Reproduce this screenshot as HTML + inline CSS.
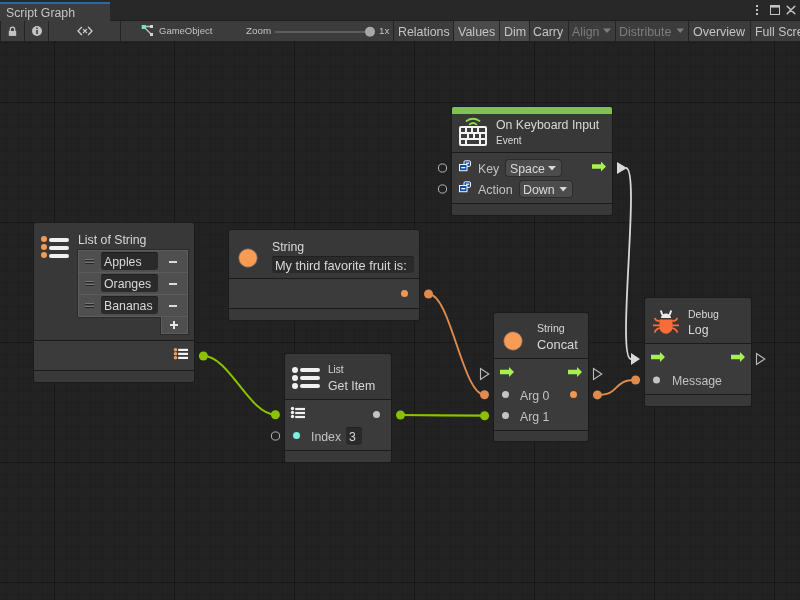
<!DOCTYPE html>
<html><head><meta charset="utf-8"><style>
*{-webkit-font-smoothing:antialiased;}
html,body{margin:0;padding:0;width:800px;height:600px;overflow:hidden;background:#222222;font-family:"Liberation Sans", sans-serif;}
</style></head><body>
<div style="position:absolute;left:0px;top:0px;width:800px;height:21px;background:#282828;"></div><div style="position:absolute;left:110px;top:20px;width:690px;height:1px;background:#1f1f1f;"></div><div style="position:absolute;left:0px;top:2px;width:110px;height:19px;background:#3c3c3c;"></div><div style="position:absolute;left:0px;top:2px;width:110px;height:2px;background:#2e68a0;"></div><div style="position:absolute;left:6px;top:7px;font-size:12.3px;line-height:1;color:#c4c4c4;white-space:nowrap;will-change:transform;">Script Graph</div><div style="position:absolute;left:0px;top:21px;width:800px;height:20px;background:#3c3c3c;"></div><div style="position:absolute;left:0px;top:21px;width:1px;height:20px;background:#242424;"></div><div style="position:absolute;left:24px;top:21px;width:1px;height:20px;background:#242424;"></div><div style="position:absolute;left:48px;top:21px;width:1px;height:20px;background:#242424;"></div><div style="position:absolute;left:120px;top:21px;width:1px;height:20px;background:#242424;"></div><div style="position:absolute;left:393px;top:21px;width:1px;height:20px;background:#242424;"></div><div style="position:absolute;left:453px;top:21px;width:1px;height:20px;background:#242424;"></div><div style="position:absolute;left:499px;top:21px;width:1px;height:20px;background:#242424;"></div><div style="position:absolute;left:529px;top:21px;width:1px;height:20px;background:#242424;"></div><div style="position:absolute;left:568px;top:21px;width:1px;height:20px;background:#242424;"></div><div style="position:absolute;left:615px;top:21px;width:1px;height:20px;background:#242424;"></div><div style="position:absolute;left:688px;top:21px;width:1px;height:20px;background:#242424;"></div><div style="position:absolute;left:750px;top:21px;width:1px;height:20px;background:#242424;"></div><div style="position:absolute;left:454px;top:21px;width:45px;height:20px;background:#4a4a4a;"></div><div style="position:absolute;left:500px;top:21px;width:29px;height:20px;background:#4a4a4a;"></div><div style="position:absolute;left:398px;top:26px;font-size:12.4px;line-height:1;color:#c4c4c4;white-space:nowrap;will-change:transform;">Relations</div><div style="position:absolute;left:458px;top:26px;font-size:12.5px;line-height:1;color:#c4c4c4;white-space:nowrap;will-change:transform;">Values</div><div style="position:absolute;left:504px;top:26px;font-size:12.5px;line-height:1;color:#c4c4c4;white-space:nowrap;will-change:transform;">Dim</div><div style="position:absolute;left:533px;top:26px;font-size:12.3px;line-height:1;color:#c4c4c4;white-space:nowrap;will-change:transform;">Carry</div><div style="position:absolute;left:572px;top:26px;font-size:12.3px;line-height:1;color:#7d7d7d;white-space:nowrap;will-change:transform;">Align</div><div style="position:absolute;left:619px;top:26px;font-size:12.4px;line-height:1;color:#7d7d7d;white-space:nowrap;will-change:transform;">Distribute</div><div style="position:absolute;left:693px;top:26px;font-size:12.5px;line-height:1;color:#c4c4c4;white-space:nowrap;will-change:transform;">Overview</div><div style="position:absolute;left:755px;top:26px;font-size:12.3px;line-height:1;color:#c4c4c4;white-space:nowrap;will-change:transform;">Full Screen</div><div style="position:absolute;left:159px;top:26px;font-size:9.5px;line-height:1;color:#c4c4c4;white-space:nowrap;will-change:transform;">GameObject</div><div style="position:absolute;left:246px;top:26px;font-size:9.8px;line-height:1;color:#c4c4c4;white-space:nowrap;will-change:transform;">Zoom</div><div style="position:absolute;left:379px;top:26px;font-size:9.8px;line-height:1;color:#c4c4c4;white-space:nowrap;will-change:transform;">1x</div><div style="position:absolute;left:275px;top:31px;width:95px;height:2px;background:#5e5e5e;"></div><div style="position:absolute;left:0px;top:41px;width:800px;height:559px;background:#222222;background-color:#222222;background-image:linear-gradient(to right, rgba(0,0,0,0.24) 1px, transparent 1px),linear-gradient(to bottom, rgba(0,0,0,0.24) 1px, transparent 1px),linear-gradient(to right, rgba(0,0,0,0.08) 1px, transparent 1px),linear-gradient(to bottom, rgba(0,0,0,0.08) 1px, transparent 1px);background-size:120px 120px,120px 120px,12px 12px,12px 12px;background-position:54px 61px,54px 61px,6px 1px,6px 1px;"></div><div style="position:absolute;left:33px;top:222px;width:162px;height:161px;background:#1b1b1b;border-radius:3px"></div><div style="position:absolute;left:34px;top:223px;width:160px;height:159px;background:#383838;border-radius:2px"></div><div style="position:absolute;left:34px;top:341px;width:160px;height:29px;background:#3b3b3b;"></div><div style="position:absolute;left:34px;top:371px;width:160px;height:11px;background:#393939;border-radius:0 0 2px 2px"></div><div style="position:absolute;left:34px;top:340px;width:160px;height:1px;background:#1b1b1b;"></div><div style="position:absolute;left:34px;top:370px;width:160px;height:1px;background:#1b1b1b;"></div><div style="position:absolute;left:228px;top:229px;width:192px;height:92px;background:#1b1b1b;border-radius:3px"></div><div style="position:absolute;left:229px;top:230px;width:190px;height:90px;background:#383838;border-radius:2px"></div><div style="position:absolute;left:229px;top:279px;width:190px;height:29px;background:#3b3b3b;"></div><div style="position:absolute;left:229px;top:309px;width:190px;height:11px;background:#393939;border-radius:0 0 2px 2px"></div><div style="position:absolute;left:229px;top:278px;width:190px;height:1px;background:#1b1b1b;"></div><div style="position:absolute;left:229px;top:308px;width:190px;height:1px;background:#1b1b1b;"></div><div style="position:absolute;left:451px;top:106px;width:162px;height:110px;background:#1b1b1b;border-radius:3px"></div><div style="position:absolute;left:452px;top:107px;width:160px;height:108px;background:#383838;border-radius:2px"></div><div style="position:absolute;left:452px;top:153px;width:160px;height:50px;background:#3b3b3b;"></div><div style="position:absolute;left:452px;top:204px;width:160px;height:11px;background:#393939;border-radius:0 0 2px 2px"></div><div style="position:absolute;left:452px;top:152px;width:160px;height:1px;background:#1b1b1b;"></div><div style="position:absolute;left:452px;top:203px;width:160px;height:1px;background:#1b1b1b;"></div><div style="position:absolute;left:452px;top:107px;width:160px;height:7px;background:#83c052;border-radius:2px 2px 0 0"></div><div style="position:absolute;left:284px;top:353px;width:108px;height:110px;background:#1b1b1b;border-radius:3px"></div><div style="position:absolute;left:285px;top:354px;width:106px;height:108px;background:#383838;border-radius:2px"></div><div style="position:absolute;left:285px;top:400px;width:106px;height:50px;background:#3b3b3b;"></div><div style="position:absolute;left:285px;top:451px;width:106px;height:11px;background:#393939;border-radius:0 0 2px 2px"></div><div style="position:absolute;left:285px;top:399px;width:106px;height:1px;background:#1b1b1b;"></div><div style="position:absolute;left:285px;top:450px;width:106px;height:1px;background:#1b1b1b;"></div><div style="position:absolute;left:493px;top:312px;width:96px;height:130px;background:#1b1b1b;border-radius:3px"></div><div style="position:absolute;left:494px;top:313px;width:94px;height:128px;background:#383838;border-radius:2px"></div><div style="position:absolute;left:494px;top:359px;width:94px;height:71px;background:#3b3b3b;"></div><div style="position:absolute;left:494px;top:431px;width:94px;height:10px;background:#393939;border-radius:0 0 2px 2px"></div><div style="position:absolute;left:494px;top:358px;width:94px;height:1px;background:#1b1b1b;"></div><div style="position:absolute;left:494px;top:430px;width:94px;height:1px;background:#1b1b1b;"></div><div style="position:absolute;left:644px;top:297px;width:108px;height:110px;background:#1b1b1b;border-radius:3px"></div><div style="position:absolute;left:645px;top:298px;width:106px;height:108px;background:#383838;border-radius:2px"></div><div style="position:absolute;left:645px;top:344px;width:106px;height:50px;background:#3b3b3b;"></div><div style="position:absolute;left:645px;top:395px;width:106px;height:11px;background:#393939;border-radius:0 0 2px 2px"></div><div style="position:absolute;left:645px;top:343px;width:106px;height:1px;background:#1b1b1b;"></div><div style="position:absolute;left:645px;top:394px;width:106px;height:1px;background:#1b1b1b;"></div><div style="position:absolute;left:78px;top:234px;font-size:12.3px;line-height:1;color:#d8d8d8;white-space:nowrap;will-change:transform;">List of String</div><div style="position:absolute;left:77px;top:249px;width:112px;height:69px;background:#2a2a2a;"></div><div style="position:absolute;left:78px;top:250px;width:110px;height:67px;background:#5c5c5c;"></div><div style="position:absolute;left:79px;top:251px;width:108px;height:65px;background:#4f4f4f;"></div><div style="position:absolute;left:85px;top:259px;width:9px;height:1px;background:#767676;"></div><div style="position:absolute;left:85px;top:260px;width:9px;height:1px;background:#262626;"></div><div style="position:absolute;left:85px;top:262px;width:9px;height:1px;background:#767676;"></div><div style="position:absolute;left:85px;top:263px;width:9px;height:1px;background:#262626;"></div><div style="position:absolute;left:101px;top:252px;width:57px;height:18px;background:#2a2a2a;border-radius:3px;box-shadow:inset 0 1px 0 #202020"></div><div style="position:absolute;left:104px;top:256px;font-size:12.3px;line-height:1;color:#d8d8d8;white-space:nowrap;will-change:transform;">Apples</div><div style="position:absolute;left:169px;top:260.8px;width:8px;height:2.2px;background:#dcdcdc;"></div><div style="position:absolute;left:79px;top:272px;width:108px;height:1px;background:#5c5c5c;"></div><div style="position:absolute;left:85px;top:281px;width:9px;height:1px;background:#767676;"></div><div style="position:absolute;left:85px;top:282px;width:9px;height:1px;background:#262626;"></div><div style="position:absolute;left:85px;top:284px;width:9px;height:1px;background:#767676;"></div><div style="position:absolute;left:85px;top:285px;width:9px;height:1px;background:#262626;"></div><div style="position:absolute;left:101px;top:274px;width:57px;height:18px;background:#2a2a2a;border-radius:3px;box-shadow:inset 0 1px 0 #202020"></div><div style="position:absolute;left:104px;top:278px;font-size:12.3px;line-height:1;color:#d8d8d8;white-space:nowrap;will-change:transform;">Oranges</div><div style="position:absolute;left:169px;top:282.8px;width:8px;height:2.2px;background:#dcdcdc;"></div><div style="position:absolute;left:79px;top:294px;width:108px;height:1px;background:#5c5c5c;"></div><div style="position:absolute;left:85px;top:303px;width:9px;height:1px;background:#767676;"></div><div style="position:absolute;left:85px;top:304px;width:9px;height:1px;background:#262626;"></div><div style="position:absolute;left:85px;top:306px;width:9px;height:1px;background:#767676;"></div><div style="position:absolute;left:85px;top:307px;width:9px;height:1px;background:#262626;"></div><div style="position:absolute;left:101px;top:296px;width:57px;height:18px;background:#2a2a2a;border-radius:3px;box-shadow:inset 0 1px 0 #202020"></div><div style="position:absolute;left:104px;top:300px;font-size:12.3px;line-height:1;color:#d8d8d8;white-space:nowrap;will-change:transform;">Bananas</div><div style="position:absolute;left:169px;top:304.8px;width:8px;height:2.2px;background:#dcdcdc;"></div><div style="position:absolute;left:160px;top:317px;width:29px;height:18px;background:#2a2a2a;"></div><div style="position:absolute;left:161px;top:317px;width:27px;height:17px;background:#5c5c5c;"></div><div style="position:absolute;left:162px;top:317px;width:25px;height:16px;background:#4f4f4f;"></div><div style="position:absolute;left:272px;top:241px;font-size:12.3px;line-height:1;color:#d8d8d8;white-space:nowrap;will-change:transform;">String</div><div style="position:absolute;left:272px;top:256px;width:142px;height:17px;background:#2a2a2a;border-radius:3px;box-shadow:inset 0 1px 0 #202020"></div><div style="position:absolute;left:275px;top:260px;font-size:12.75px;line-height:1;color:#d8d8d8;white-space:nowrap;will-change:transform;">My third favorite fruit is:</div><div style="position:absolute;left:496px;top:119px;font-size:12.3px;line-height:1;color:#d8d8d8;white-space:nowrap;will-change:transform;">On Keyboard Input</div><div style="position:absolute;left:496px;top:136px;font-size:10px;line-height:1;color:#d8d8d8;white-space:nowrap;will-change:transform;">Event</div><div style="position:absolute;left:478px;top:163px;font-size:12.3px;line-height:1;color:#c2c2c2;white-space:nowrap;will-change:transform;">Key</div><div style="position:absolute;left:478px;top:184px;font-size:12.5px;line-height:1;color:#c2c2c2;white-space:nowrap;will-change:transform;">Action</div><div style="position:absolute;left:506px;top:160px;width:55px;height:16px;background:#4c4c4c;border-radius:3px;box-shadow:0 0 0 1px #2c2c2c"></div><div style="position:absolute;left:510px;top:163px;font-size:12.3px;line-height:1;color:#d8d8d8;white-space:nowrap;will-change:transform;">Space</div><div style="position:absolute;left:520px;top:181px;width:52px;height:16px;background:#4c4c4c;border-radius:3px;box-shadow:0 0 0 1px #2c2c2c"></div><div style="position:absolute;left:523px;top:184px;font-size:12.4px;line-height:1;color:#d8d8d8;white-space:nowrap;will-change:transform;">Down</div><div style="position:absolute;left:328px;top:365px;font-size:10px;line-height:1;color:#d8d8d8;white-space:nowrap;will-change:transform;">List</div><div style="position:absolute;left:328px;top:380px;font-size:12.3px;line-height:1;color:#d8d8d8;white-space:nowrap;will-change:transform;">Get Item</div><div style="position:absolute;left:311px;top:431px;font-size:12.3px;line-height:1;color:#c2c2c2;white-space:nowrap;will-change:transform;">Index</div><div style="position:absolute;left:346px;top:427px;width:16px;height:17.5px;background:#2a2a2a;border-radius:3px;box-shadow:inset 0 1px 0 #202020"></div><div style="position:absolute;left:349px;top:431px;font-size:12.3px;line-height:1;color:#d8d8d8;white-space:nowrap;will-change:transform;">3</div><div style="position:absolute;left:537px;top:323px;font-size:10.6px;line-height:1;color:#d8d8d8;white-space:nowrap;will-change:transform;">String</div><div style="position:absolute;left:537px;top:339px;font-size:12.9px;line-height:1;color:#d8d8d8;white-space:nowrap;will-change:transform;">Concat</div><div style="position:absolute;left:520px;top:390px;font-size:12.3px;line-height:1;color:#c2c2c2;white-space:nowrap;will-change:transform;">Arg 0</div><div style="position:absolute;left:520px;top:411px;font-size:12.3px;line-height:1;color:#c2c2c2;white-space:nowrap;will-change:transform;">Arg 1</div><div style="position:absolute;left:688px;top:309px;font-size:10.5px;line-height:1;color:#d8d8d8;white-space:nowrap;will-change:transform;">Debug</div><div style="position:absolute;left:688px;top:324px;font-size:12.3px;line-height:1;color:#d8d8d8;white-space:nowrap;will-change:transform;">Log</div><div style="position:absolute;left:672px;top:375px;font-size:12.3px;line-height:1;color:#c2c2c2;white-space:nowrap;will-change:transform;">Message</div>
<svg width="800" height="600" style="position:absolute;left:0;top:0">
<g fill="#c4c4c4"><rect x="756" y="5" width="2" height="2"/><rect x="756" y="9" width="2" height="2"/><rect x="756" y="13" width="2" height="2"/></g><rect x="770.5" y="5.5" width="9" height="9" fill="none" stroke="#c4c4c4" stroke-width="1"/><rect x="770" y="5" width="10" height="2.6" fill="#c4c4c4"/><path d="M787.2 6.2 L794.8 13.8 M794.8 6.2 L787.2 13.8" stroke="#c4c4c4" stroke-width="1.5" stroke-linecap="round"/><path d="M603 28.5 L611 28.5 L607 33 Z" fill="#7d7d7d"/><path d="M676.5 28.5 L684 28.5 L680.2 33 Z" fill="#7d7d7d"/><path d="M10.3 31 V29.4 A2.2 2.2 0 0 1 14.7 29.4 V31" fill="none" stroke="#c4c4c4" stroke-width="1.3"/><rect x="8.8" y="30.9" width="7.4" height="5" fill="#c4c4c4"/><circle cx="37" cy="31" r="5" fill="#c4c4c4"/><rect x="36.2" y="30" width="1.6" height="4" fill="#3c3c3c"/><rect x="36.2" y="27.6" width="1.6" height="1.5" fill="#3c3c3c"/><path d="M81.6 27.3 L78 31 L81.6 34.7 M88.4 27.3 L92 31 L88.4 34.7 M83.4 29.4 L86.6 32.6 M86.6 29.4 L83.4 32.6" fill="none" stroke="#cfcfcf" stroke-width="1.25" stroke-linecap="round"/><path d="M144 26.5 L151 26.5 M144 27 L151.5 34.5" stroke="#c4c4c4" stroke-width="1.3"/><rect x="141.7" y="25" width="4" height="4" fill="#6fe8d2"/><rect x="150" y="25" width="3" height="3" fill="#d4d4d4"/><rect x="150" y="33" width="3" height="3" fill="#d4d4d4"/><circle cx="370" cy="31.8" r="5" fill="#a8a8a8"/><g fill="#f59a52"><circle cx="44" cy="239" r="3"/><circle cx="44" cy="247" r="3"/><circle cx="44" cy="255" r="3"/></g><g fill="#f0f0f0"><rect x="49" y="238" width="20" height="4" rx="2"/><rect x="49" y="246" width="20" height="4" rx="2"/><rect x="49" y="254" width="20" height="4" rx="2"/></g><path d="M170 325 H178 M174 321 V329" stroke="#e6e6e6" stroke-width="2"/><g fill="#f59a52"><circle cx="175.5" cy="349.7" r="1.8"/><circle cx="175.5" cy="353.7" r="1.8"/><circle cx="175.5" cy="357.7" r="1.8"/></g><g fill="#f4f4f4"><rect x="178.2" y="348.8" width="9.8" height="2.2"/><rect x="178.2" y="352.8" width="9.8" height="2.2"/><rect x="178.2" y="356.8" width="9.8" height="2.2"/></g><circle cx="248" cy="258" r="9.3" fill="#f89b55" stroke="#56626c" stroke-width="0.7"/><circle cx="404.5" cy="293.5" r="3.5" fill="#f5964f"/><rect x="459" y="126" width="28" height="20" rx="2" fill="#f2f2f2"/><g fill="#3b3b3b"><rect x="461" y="128" width="4" height="4"/><rect x="467" y="128" width="4" height="4"/><rect x="473" y="128" width="4" height="4"/><rect x="479" y="128" width="6" height="4"/><rect x="461" y="134" width="6" height="4"/><rect x="469" y="134" width="4" height="4"/><rect x="475" y="134" width="4" height="4"/><rect x="481" y="134" width="4" height="4"/><rect x="461" y="140" width="4" height="4"/><rect x="467" y="140" width="12" height="4"/><rect x="481" y="140" width="4" height="4"/></g><path d="M466.5 121 Q473 116.5 479.5 121 M469.6 124.4 Q473 121.6 476.4 124.4" fill="none" stroke="#8fdc4a" stroke-width="1.8" stroke-linecap="round"/><circle cx="442.5" cy="168" r="4.1" fill="none" stroke="#bdbdbd" stroke-width="0.95"/><circle cx="442.5" cy="189" r="4.1" fill="none" stroke="#bdbdbd" stroke-width="0.95"/><g transform="translate(459,160)"><rect x="5" y="0.8" width="6.5" height="5.6" rx="1.2" fill="#0b4ea2" stroke="#f4f4f4" stroke-width="1"/><rect x="7" y="2.6" width="3.2" height="1.2" fill="#fff"/><rect x="0.5" y="4.5" width="7.5" height="6.2" fill="#0b4ea2" stroke="#f4f4f4" stroke-width="1"/><rect x="2.3" y="7" width="4" height="1.3" fill="#fff"/></g><g transform="translate(459,181)"><rect x="5" y="0.8" width="6.5" height="5.6" rx="1.2" fill="#0b4ea2" stroke="#f4f4f4" stroke-width="1"/><rect x="7" y="2.6" width="3.2" height="1.2" fill="#fff"/><rect x="0.5" y="4.5" width="7.5" height="6.2" fill="#0b4ea2" stroke="#f4f4f4" stroke-width="1"/><rect x="2.3" y="7" width="4" height="1.3" fill="#fff"/></g><path d="M548 166 L556 166 L552 170.5 Z" fill="#d8d8d8"/><path d="M559.5 187 L567 187 L563.2 191.5 Z" fill="#d8d8d8"/><path d="M592 164.3 H601 V161.5 L606 166.5 L601 171.5 V168.7 H592 Z" fill="#a6f052"/><path d="M617 162 L617 174 L627 168 Z" fill="#dadada"/><g fill="#f0f0f0"><circle cx="295" cy="370" r="3"/><circle cx="295" cy="378" r="3"/><circle cx="295" cy="386" r="3"/><rect x="300" y="368" width="20" height="4" rx="2"/><rect x="300" y="376" width="20" height="4" rx="2"/><rect x="300" y="384" width="20" height="4" rx="2"/></g><g fill="#f0f0f0"><circle cx="292.5" cy="408.5" r="1.7"/><circle cx="292.5" cy="412.5" r="1.7"/><circle cx="292.5" cy="416.5" r="1.7"/><rect x="295.2" y="407.9" width="9.8" height="2.2"/><rect x="295.2" y="411.9" width="9.8" height="2.2"/><rect x="295.2" y="415.9" width="9.8" height="2.2"/></g><circle cx="376.5" cy="414.5" r="3.5" fill="#c4c4c4"/><circle cx="296.5" cy="435.5" r="3.5" fill="#7ef0e2"/><circle cx="275.5" cy="436" r="4.1" fill="none" stroke="#bdbdbd" stroke-width="0.95"/><circle cx="513" cy="341" r="9.3" fill="#f89b55" stroke="#56626c" stroke-width="0.7"/><path d="M500 369.8 H509 V367 L514 372 L509 377 V374.2 H500 Z" fill="#a6f052"/><path d="M568 369.8 H577 V367 L582 372 L577 377 V374.2 H568 Z" fill="#a6f052"/><path d="M480.5 368.5 L480.5 379.5 L488.8 374 Z" fill="none" stroke="#bbbbbb" stroke-width="1.1"/><path d="M593.5 368.5 L593.5 379.5 L601.8 374 Z" fill="none" stroke="#bbbbbb" stroke-width="1.1"/><circle cx="505.5" cy="394.5" r="3.5" fill="#c4c4c4"/><circle cx="505.5" cy="415.5" r="3.5" fill="#c4c4c4"/><circle cx="573.5" cy="394.5" r="3.5" fill="#f5964f"/><path d="M659.5 319.6 H672.5 V327.2 A6.5 6.5 0 0 1 659.5 327.2 Z" fill="#f86c3a"/><path d="M654.8 317.8 Q655.3 321 659.8 321 M677.2 317.8 Q676.7 321 672.2 321 M653 325.3 H660 M679 325.3 H672 M654.6 332.6 Q656 328.6 660 328.2 M677.4 332.6 Q676 328.6 672 328.2" fill="none" stroke="#f86c3a" stroke-width="1.7"/><path d="M661 318 A5 4.6 0 0 1 671 318 Z" fill="#ececec"/><path d="M660.8 310.5 L662.4 315 M671.2 310.5 L669.6 315" stroke="#ececec" stroke-width="2"/><path d="M651 354.8 H660 V352 L665 357 L660 362 V359.2 H651 Z" fill="#a6f052"/><path d="M731 354.8 H740 V352 L745 357 L740 362 V359.2 H731 Z" fill="#a6f052"/><path d="M756.5 353.5 L756.5 364.5 L764.8 359 Z" fill="none" stroke="#bbbbbb" stroke-width="1.1"/><path d="M631 353 L631 365 L640 359 Z" fill="#dadada"/><circle cx="656.5" cy="380" r="3.5" fill="#c4c4c4"/><path d="M626 168 C641 168 616 359 631 359" fill="none" stroke="#d8d8d8" stroke-width="1.8"/><path d="M428.5 294 C450.5 294 462.6 394.8 484.6 394.8" fill="none" stroke="#de8b4e" stroke-width="1.8"/><path d="M203.4 356 C229.4 356 249.39999999999998 414.7 275.4 414.7" fill="none" stroke="#8bc200" stroke-width="2"/><path d="M400.5 415 C430.5 415 454.6 415.7 484.6 415.7" fill="none" stroke="#8bc200" stroke-width="2.2"/><path d="M597.4 394.9 C621.4 394.9 611.6 380 635.6 380" fill="none" stroke="#de8b4e" stroke-width="1.9"/><circle cx="203.4" cy="356" r="4.5" fill="#8bc200"/><circle cx="275.4" cy="414.7" r="4.5" fill="#8bc200"/><circle cx="400.5" cy="415" r="4.5" fill="#8bc200"/><circle cx="484.6" cy="415.7" r="4.5" fill="#8bc200"/><circle cx="428.5" cy="294" r="4.5" fill="#de8b4e"/><circle cx="484.5" cy="394.8" r="4.5" fill="#de8b4e"/><circle cx="597.4" cy="394.9" r="4.5" fill="#de8b4e"/><circle cx="635.6" cy="380" r="4.5" fill="#de8b4e"/>
</svg>
</body></html>
